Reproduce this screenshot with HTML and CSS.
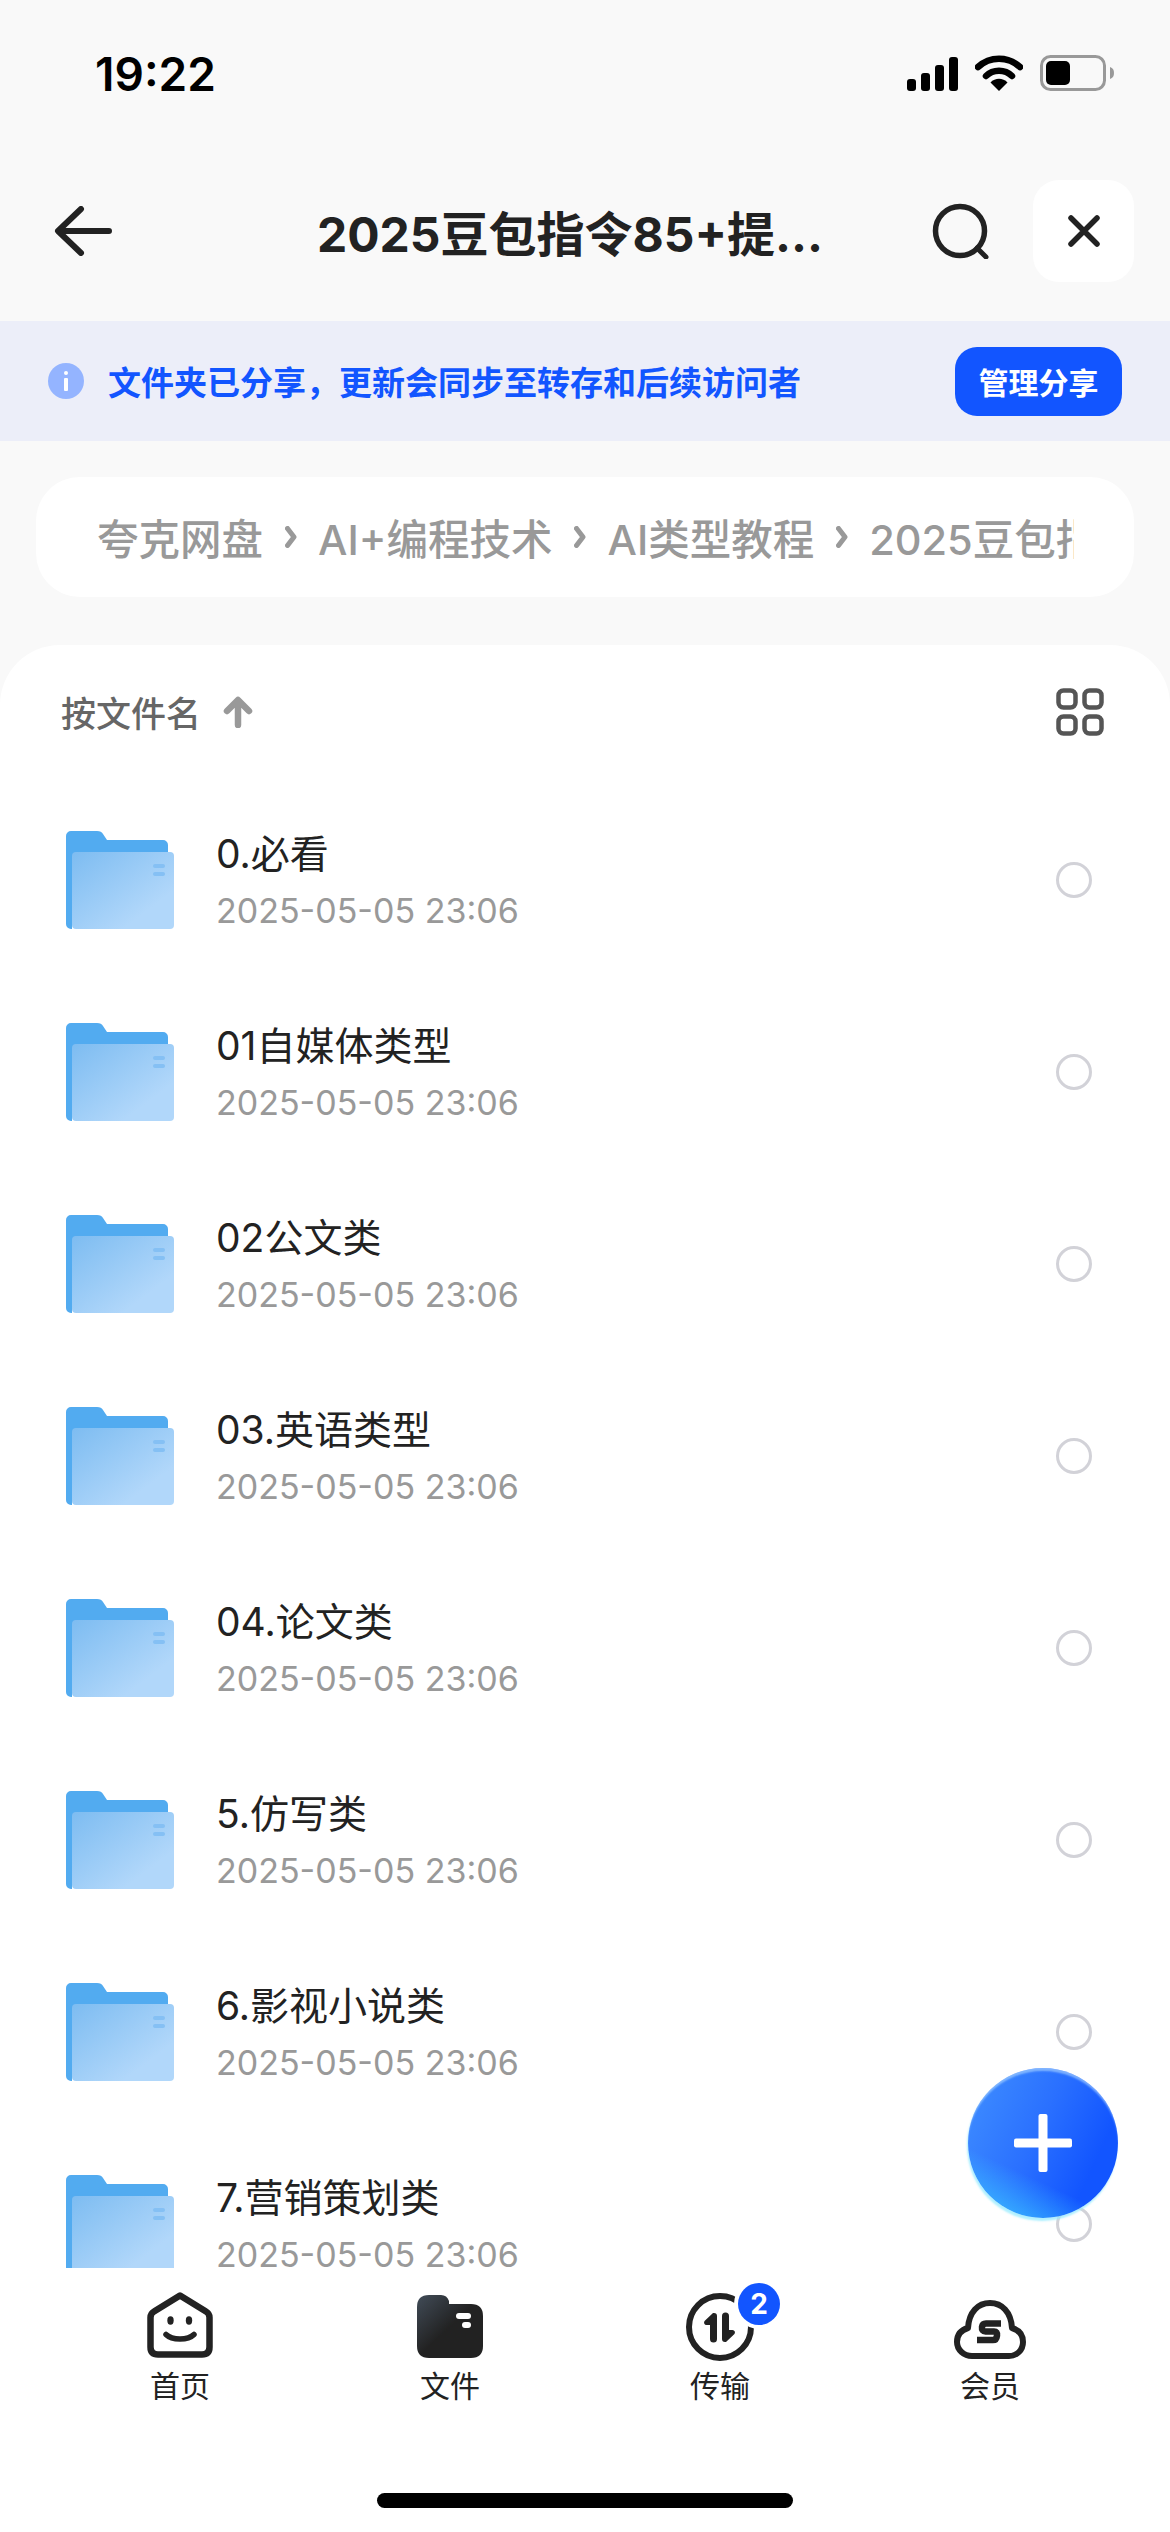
FILE: index.html
```html
<!DOCTYPE html>
<html lang="zh-CN">
<head>
    <meta charset="UTF-8">
    <title>夸克网盘</title>
    <link rel="stylesheet" href="styles.css">
</head>
<body>
<svg class="defs" width="0" height="0">
    <defs>
        <linearGradient id="folderFront" x1="0" y1="0" x2="1" y2="1">
            <stop offset="0" stop-color="#7DBCF1"/>
            <stop offset="0.75" stop-color="#B1D7FA"/>
            <stop offset="1" stop-color="#B1D7FA"/>
        </linearGradient>
        <linearGradient id="fileTab" x1="0" y1="0" x2="1" y2="1">
            <stop offset="0" stop-color="#414C58"/>
            <stop offset="0.5" stop-color="#222222"/>
        </linearGradient>
        <symbol id="folder" viewBox="0 0 108 100">
            <path d="M0 6a5 5 0 0 1 5-5h26c3 0 5 1 6 3l4 6h56a5 5 0 0 1 5 5v30H6v54H5a5 5 0 0 1-5-5z" fill="#52ABF0"/>
            <rect x="6" y="22" width="102" height="77" rx="4" fill="url(#folderFront)"/>
            <rect x="87" y="34" width="12" height="4" rx="2" fill="#85C0F4"/>
            <rect x="87" y="42" width="12" height="4" rx="2" fill="#85C0F4"/>
        </symbol>
    </defs>
</svg>

<div class="page">
    <div class="status-bar">
        <span class="time">19:22</span>
        <div class="status-icons">
            <svg width="51" height="34" viewBox="0 0 51 34">
                <rect x="0" y="22" width="9" height="12" rx="3"/>
                <rect x="14" y="16" width="9" height="18" rx="3"/>
                <rect x="28" y="8" width="9" height="26" rx="3"/>
                <rect x="42" y="0" width="9" height="34" rx="3"/>
            </svg>
            <svg width="48" height="36" viewBox="0 0 48 36">
                <path d="M3 12C15 1 33 1 45 12" fill="none" stroke="#000" stroke-width="6.500" stroke-linecap="round"/>
                <path d="M11 21C18 14 30 14 37 21" fill="none" stroke="#000" stroke-width="6.500" stroke-linecap="round"/>
                <path d="M15.500 27.500C20 22.500 28 22.500 32.500 27.500L24 36z"/>
            </svg>
            <svg width="74" height="36" viewBox="0 0 74 36">
                <rect x="1.500" y="1.500" width="63" height="33" rx="9" fill="none" stroke="#999" stroke-width="3"/>
                <rect x="6" y="6" width="24" height="24" rx="5"/>
                <path d="M70 12c3 1 4 3 4 6s-1 5-4 6z" fill="#999"/>
            </svg>
        </div>
    </div>

    <div class="nav-bar">
        <svg class="back-icon" width="58" height="50" viewBox="0 0 58 50">
            <path d="M27 3L4 25L27 47M5 25H55" fill="none" stroke="#222" stroke-width="6" stroke-linecap="round" stroke-linejoin="round"/>
        </svg>
        <h1 class="nav-title">2025豆包指令85+提...</h1>
        <svg class="search-icon" width="58" height="56" viewBox="0 0 58 56">
            <circle cx="28" cy="28" r="24.500" fill="none" stroke="#222" stroke-width="5.500"/>
            <path d="M45 45L54 54" fill="none" stroke="#222" stroke-width="5" stroke-linecap="round"/>
        </svg>
        <div class="close-btn">
            <svg width="32" height="32" viewBox="0 0 32 32">
                <path d="M3 3L29 29M29 3L3 29" fill="none" stroke="#222" stroke-width="5.500" stroke-linecap="round"/>
            </svg>
        </div>
    </div>

    <div class="share-banner">
        <svg width="36" height="36" viewBox="0 0 36 36">
            <circle cx="18" cy="18" r="18" fill="#94B4FF"/>
            <rect x="16" y="15" width="4" height="13" rx="1" fill="#fff"/>
            <rect x="16" y="8" width="4" height="4" rx="2" fill="#fff"/>
        </svg>
        <span class="share-text">文件夹已分享，更新会同步至转存和后续访问者</span>
        <div class="share-btn">管理分享</div>
    </div>

    <div class="breadcrumb">
        <div class="crumbs">
            <span>夸克网盘</span>
            <svg class="chev" width="12" height="22" viewBox="0 0 12 22"><path d="M2.500 2.500L9 11L2.500 19.500" /></svg>
            <span>AI+编程技术</span>
            <svg class="chev" width="12" height="22" viewBox="0 0 12 22"><path d="M2.500 2.500L9 11L2.500 19.500" /></svg>
            <span>AI类型教程</span>
            <svg class="chev" width="12" height="22" viewBox="0 0 12 22"><path d="M2.500 2.500L9 11L2.500 19.500" /></svg>
            <span>2025豆包指令85+提示词</span>
        </div>
    </div>

    <div class="sheet">
        <div class="sort-bar">
            <span class="sort-label">按文件名</span>
            <svg width="30" height="32" viewBox="0 0 30 32">
                <path d="M15 29V5M4 15L15 4L26 15" fill="none" stroke="#999" stroke-width="6.500" stroke-linecap="round" stroke-linejoin="round"/>
            </svg>
            <svg class="grid-icon" width="48" height="48" viewBox="0 0 48 48">
                <g fill="none" stroke="#555" stroke-width="4.500">
                    <rect x="2.500" y="2.500" width="17" height="17" rx="5"/>
                    <rect x="28.500" y="2.500" width="17" height="17" rx="5"/>
                    <rect x="2.500" y="28.500" width="17" height="17" rx="5"/>
                    <rect x="28.500" y="28.500" width="17" height="17" rx="5"/>
                </g>
            </svg>
        </div>

        <div class="file-list">
            <div class="file-row">
                <svg class="folder-icon"><use href="#folder"/></svg>
                <div class="file-info"><div class="file-name">0.必看</div><div class="file-date">2025-05-05 23:06</div></div>
                <div class="radio"></div>
            </div>
            <div class="file-row">
                <svg class="folder-icon"><use href="#folder"/></svg>
                <div class="file-info"><div class="file-name">01自媒体类型</div><div class="file-date">2025-05-05 23:06</div></div>
                <div class="radio"></div>
            </div>
            <div class="file-row">
                <svg class="folder-icon"><use href="#folder"/></svg>
                <div class="file-info"><div class="file-name">02公文类</div><div class="file-date">2025-05-05 23:06</div></div>
                <div class="radio"></div>
            </div>
            <div class="file-row">
                <svg class="folder-icon"><use href="#folder"/></svg>
                <div class="file-info"><div class="file-name">03.英语类型</div><div class="file-date">2025-05-05 23:06</div></div>
                <div class="radio"></div>
            </div>
            <div class="file-row">
                <svg class="folder-icon"><use href="#folder"/></svg>
                <div class="file-info"><div class="file-name">04.论文类</div><div class="file-date">2025-05-05 23:06</div></div>
                <div class="radio"></div>
            </div>
            <div class="file-row">
                <svg class="folder-icon"><use href="#folder"/></svg>
                <div class="file-info"><div class="file-name">5.仿写类</div><div class="file-date">2025-05-05 23:06</div></div>
                <div class="radio"></div>
            </div>
            <div class="file-row">
                <svg class="folder-icon"><use href="#folder"/></svg>
                <div class="file-info"><div class="file-name">6.影视小说类</div><div class="file-date">2025-05-05 23:06</div></div>
                <div class="radio"></div>
            </div>
            <div class="file-row">
                <svg class="folder-icon"><use href="#folder"/></svg>
                <div class="file-info"><div class="file-name">7.营销策划类</div><div class="file-date">2025-05-05 23:06</div></div>
                <div class="radio"></div>
            </div>
        </div>
    </div>

    <div class="fab">
        <svg width="58" height="58" viewBox="0 0 58 58">
            <rect x="24.500" y="0" width="9" height="58" rx="2" fill="#fff"/>
            <rect x="0" y="24.500" width="58" height="9" rx="2" fill="#fff"/>
        </svg>
    </div>

    <div class="tab-bar">
        <div class="tab">
            <div class="tab-icon">
                <svg width="66" height="66" viewBox="0 0 66 66">
                    <path d="M33 3.500L59 19.500Q62.500 21.500 62.500 25.500V55Q62.500 62.500 55 62.500H11Q3.500 62.500 3.500 55V25.500Q3.500 21.500 7 19.500z" fill="none" stroke="#222" stroke-width="6.500" stroke-linejoin="round"/>
                    <ellipse cx="23.500" cy="28.500" rx="3.200" ry="4.200" fill="#222"/>
                    <ellipse cx="42" cy="28.500" rx="3.200" ry="4.200" fill="#222"/>
                    <path d="M19 42.500C25 48.500 41 48.500 47 42.500" fill="none" stroke="#222" stroke-width="5.500" stroke-linecap="round"/>
                </svg>
            </div>
            <span>首页</span>
        </div>
        <div class="tab">
            <div class="tab-icon">
                <svg width="66" height="66" viewBox="0 0 66 66">
                    <path d="M0 15Q0 3 12 3H24Q30 3 32 9L32 12H54Q66 12 66 24V54Q66 66 54 66H12Q0 66 0 54z" fill="url(#fileTab)"/>
                    <rect x="39" y="21" width="15" height="6" rx="3" fill="#fff"/>
                    <rect x="45" y="30" width="9" height="6" rx="3" fill="#fff"/>
                </svg>
            </div>
            <span>文件</span>
        </div>
        <div class="tab">
            <div class="tab-icon">
                <svg width="70" height="70" viewBox="0 0 70 70">
                    <circle cx="35" cy="35" r="31" fill="none" stroke="#222" stroke-width="6"/>
                    <path d="M28 21h1a3 3 0 0 1 3 3V47a3.500 3.500 0 0 1-7 0V33H21.500a2.500 2.500 0 0 1-1.700-4.300z" fill="#222"/>
                    <path d="M28 21h1a3 3 0 0 1 3 3V47a3.500 3.500 0 0 1-7 0V33H21.500a2.500 2.500 0 0 1-1.700-4.300z" fill="#222" transform="rotate(180 34.500 35.500)"/>
                </svg>
                <span class="badge">2</span>
            </div>
            <span>传输</span>
        </div>
        <div class="tab">
            <div class="tab-icon">
                <svg width="72" height="70" viewBox="0 -5 72 70">
                    <path d="M18 59H55C63 59 69 53 69 45C69 38 65 33 58 31C57 15 48 6 36 6C24 6 15 15 14 31C7 33 3 38 3 45C3 53 10 59 18 59z" fill="none" stroke="#222" stroke-width="6" stroke-linejoin="round"/>
                    <path d="M47 26.500H32Q28.500 26.500 28 30Q27.500 34.500 31.500 34.500H40Q43.500 34.500 43 38.500Q42.500 43 39 43H23" fill="none" stroke="#222" stroke-width="6.500"/>
                </svg>
            </div>
            <span>会员</span>
        </div>
    </div>

    <div class="home-area">
        <div class="home-bar"></div>
    </div>
</div>
</body>
</html>
```

FILE: styles.css
```css
* {
    box-sizing: border-box;
    margin: 0;
    font-family: Inter, "Noto Sans CJK SC", sans-serif;
}
body {
    background: #F9F9F9;
}
.defs {
    position: absolute;
}
.page {
    position: relative;
    width: 1170px;
    height: 2532px;
    display: flex;
    flex-direction: column;
    overflow: hidden;
    background: #F9F9F9;
    color: #222;
}

.status-bar {
    height: 180px;
    padding: 55px 56px 0 95px;
    display: flex;
    justify-content: space-between;
    align-items: flex-start;
}
.time {
    font-size: 46px;
    font-weight: 600;
    line-height: 38px;
    color: #000;
}
.status-icons {
    display: flex;
    align-items: flex-end;
    gap: 17px;
    height: 36px;
}

.nav-bar {
    height: 141px;
    padding: 0 36px 39px 54px;
    display: flex;
    align-items: center;
}
.back-icon {
    flex: none;
}
.nav-title {
    width: 504px;
    margin-left: 205px;
    font-size: 48px;
    font-weight: 700;
    white-space: nowrap;
    color: #222;
}
.search-icon {
    margin-left: 111px;
    flex: none;
}
.close-btn {
    width: 102px;
    height: 102px;
    margin-left: 43px;
    background: #fff;
    border-radius: 26px;
    display: flex;
    align-items: center;
    justify-content: center;
}

.share-banner {
    height: 120px;
    padding: 0 48px;
    background: #ECEEF9;
    display: flex;
    align-items: center;
}
.share-text {
    margin-left: 24px;
    font-size: 33px;
    font-weight: 600;
    color: #1255FF;
    white-space: nowrap;
}
.share-btn {
    width: 167px;
    height: 69px;
    margin-left: auto;
    background: #1255FF;
    border-radius: 22px;
    color: #fff;
    font-size: 30px;
    font-weight: 700;
    display: flex;
    align-items: center;
    justify-content: center;
}

.breadcrumb {
    height: 120px;
    margin: 36px 36px 0;
    padding: 0 60px 0 61px;
    background: #fff;
    border-radius: 44px;
    display: flex;
    align-items: center;
}
.crumbs {
    width: 100%;
    overflow: hidden;
    display: flex;
    align-items: center;
    gap: 21.500px;
    white-space: nowrap;
    font-size: 41.500px;
    font-weight: 500;
    color: #999;
}
.crumbs span {
    flex: none;
}
.chev {
    flex: none;
    fill: none;
    stroke: #999;
    stroke-width: 5;
    stroke-linecap: round;
    stroke-linejoin: round;
}

.sheet {
    flex: 1;
    min-height: 0;
    margin-top: 48px;
    background: #fff;
    border-radius: 60px 60px 0 0;
    overflow: hidden;
}
.sort-bar {
    height: 139px;
    padding: 0 66px 6px 61px;
    display: flex;
    align-items: center;
    gap: 22px;
}
.sort-label {
    font-size: 35px;
    font-weight: 500;
    color: #666;
}
.grid-icon {
    margin-left: auto;
}

.file-row {
    height: 192px;
    padding: 0 78px 0 66px;
    display: flex;
    align-items: center;
}
.folder-icon {
    width: 108px;
    height: 100px;
    flex: none;
}
.file-info {
    margin-left: 42px;
}
.file-name {
    font-size: 39px;
    line-height: 52px;
    color: #222;
}
.file-date {
    margin-top: 9px;
    font-size: 34px;
    line-height: 44px;
    color: #999;
}
.radio {
    width: 36px;
    height: 36px;
    margin-left: auto;
    border: 3px solid #D2D2D8;
    border-radius: 50%;
}

.fab {
    position: absolute;
    left: 968px;
    top: 2068px;
    width: 150px;
    height: 150px;
    border-radius: 50%;
    background:
        linear-gradient(205deg, rgba(60, 200, 255, 0) 68%, rgba(60, 200, 255, 0.9) 97%),
        linear-gradient(115deg, #3E8CFF 5%, #2A70FF 45%, #1255FF 78%);
    box-shadow: inset 0 4px 2px -1px rgba(180, 220, 255, 0.6), -1px 3px 2px rgba(150, 235, 255, 0.75);
    display: flex;
    align-items: center;
    justify-content: center;
}

.tab-bar {
    height: 156px;
    padding: 24px 45px 0;
    background: #fff;
    display: grid;
    grid-template-columns: repeat(4, 1fr);
}
.tab {
    display: flex;
    flex-direction: column;
    align-items: center;
    font-size: 30px;
    line-height: 40px;
    color: #222;
}
.tab-icon {
    position: relative;
    height: 74px;
}
.badge {
    position: absolute;
    left: 53px;
    top: -9px;
    width: 42px;
    height: 42px;
    border-radius: 50%;
    background: #1255FF;
    box-shadow: 0 0 0 4px #fff;
    color: #fff;
    font-size: 28px;
    font-weight: 700;
    line-height: 42px;
    text-align: center;
}

.home-area {
    height: 108px;
    background: #fff;
    padding-top: 69px;
}
.home-bar {
    width: 416px;
    height: 15px;
    margin: 0 auto;
    background: #000;
    border-radius: 8px;
}
```
